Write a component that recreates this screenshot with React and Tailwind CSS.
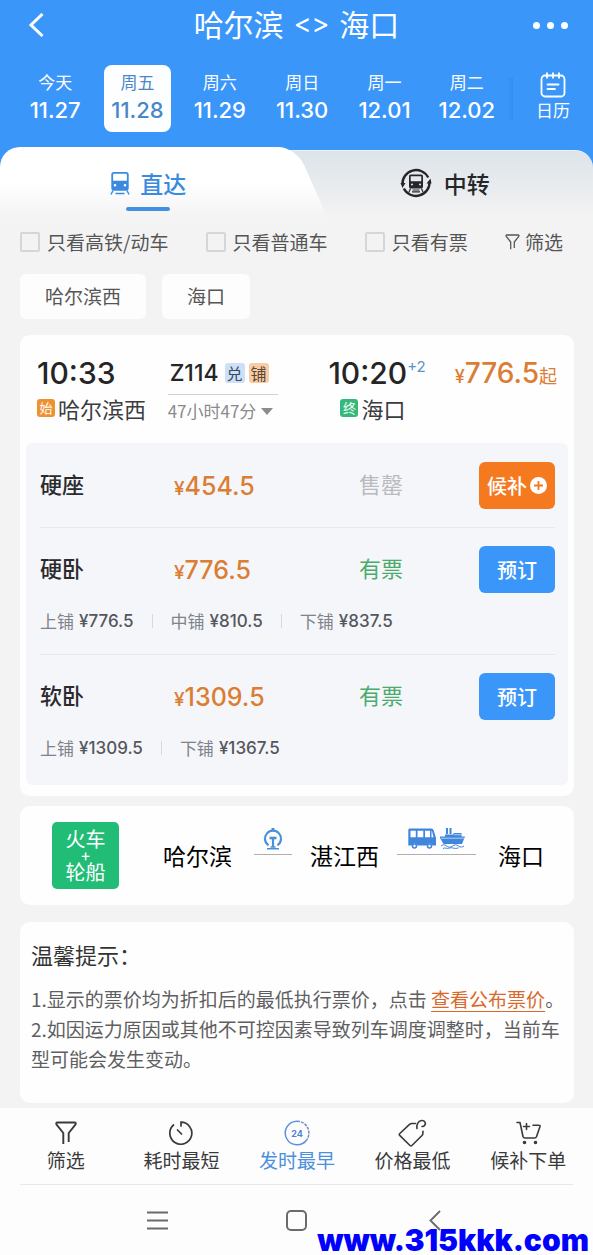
import React from "react";

const days = [
  { label: "今天", date: "11.27" },
  { label: "周五", date: "11.28", active: true },
  { label: "周六", date: "11.29" },
  { label: "周日", date: "11.30" },
  { label: "周一", date: "12.01" },
  { label: "周二", date: "12.02" },
];

const seats = [
  { name: "硬座", price: "454.5", available: false, berths: [] },
  {
    name: "硬卧",
    price: "776.5",
    available: true,
    berths: [
      ["上铺", "776.5"],
      ["中铺", "810.5"],
      ["下铺", "837.5"],
    ],
  },
  {
    name: "软卧",
    price: "1309.5",
    available: true,
    berths: [
      ["上铺", "1309.5"],
      ["下铺", "1367.5"],
    ],
  },
];

function TrainIcon() {
  return (
    <svg className="h-[23px] w-5" viewBox="0 0 20 23" aria-hidden="true">
      <path
        fillRule="evenodd"
        fill="currentColor"
        d="M4 0h12c1.800 0 2.700 1 2.700 2.600v13.400c0 1.700-1 2.700-2.700 2.700H4c-1.700 0-2.700-1-2.700-2.700V2.600C1.300 1 2.200 0 4 0ZM4.300 1.800c-.8 0-1.200.4-1.200 1.200v5.800h13.800V3c0-.8-.4-1.200-1.200-1.200ZM5 12a1.300 1.300 0 1 0 0 2.600A1.300 1.300 0 0 0 5 12Zm10 0a1.300 1.300 0 1 0 0 2.600 1.300 1.300 0 0 0 0-2.600Z"
      />
      <path d="M3 18.500 1 22.500M17 18.500l2 4M5.500 21.500h9" stroke="currentColor" strokeWidth="1.500" fill="none" />
    </svg>
  );
}

function TransferIcon() {
  return (
    <svg className="size-8" viewBox="0 0 32 32" fill="none" aria-hidden="true">
      <path d="M2.500 17.500A13.600 13.600 0 0 1 28.200 10.500M29.500 14.500A13.600 13.600 0 0 1 3.800 21.500" stroke="currentColor" strokeWidth="2.400" />
      <path d="M.5 16h5l-3 5ZM26.500 16.500h5l-1-5Z" fill="currentColor" />
      <path
        fillRule="evenodd"
        fill="currentColor"
        d="M11 7.500h10c1.500 0 2 .8 2 2v10c0 1.300-.7 2-2 2H11c-1.300 0-2-.7-2-2v-10c0-1.200.5-2 2-2Zm-.3 1.700v5h10.600v-5Zm1.300 7.300a1 1 0 1 0 0 2 1 1 0 0 0 0-2Zm8 0a1 1 0 1 0 0 2 1 1 0 0 0 0-2Z"
      />
      <path d="M10.500 21.500 9 25M21.500 21.500 23 25M12.500 23h7M12 24.800h8" stroke="currentColor" strokeWidth="1.200" />
    </svg>
  );
}

function CalendarIcon() {
  return (
    <svg className="size-[26px]" viewBox="0 0 26 26" fill="none" stroke="currentColor" strokeWidth="1.800" strokeLinecap="round" aria-hidden="true">
      <rect x="1.500" y="3.500" width="23" height="21" rx="3.500" />
      <path d="M7 1.200v4.600M13 1.200v4.600M19 1.200v4.600M7.500 12.500h11M7.500 17h7.500" />
    </svg>
  );
}

function FunnelIcon({ className }) {
  return (
    <svg className={className} viewBox="0 0 22 24" fill="none" stroke="currentColor" strokeWidth="1.900" strokeLinejoin="round" aria-hidden="true">
      <path d="M8.300 23V12L1.600 3.600C.9 2.600 1.200 1.500 2.500 1.500h17c1.300 0 1.600 1.100.9 2.100L13.700 12v9" />
    </svg>
  );
}

function TimerIcon() {
  return (
    <svg className="size-6" viewBox="0 0 24 24" fill="none" stroke="currentColor" strokeWidth="1.700" strokeLinecap="round" aria-hidden="true">
      <path d="M12 5V1.200A11 11 0 1 1 4.500 4M8.500 9l4 4" />
    </svg>
  );
}

function Clock24Icon() {
  return (
    <svg className="size-[26px]" viewBox="0 0 26 26" fill="none" aria-hidden="true">
      <path d="M13 1.200a11.800 11.800 0 1 0 9.800 18.500" stroke="#5b93dc" strokeWidth="1.500" />
      <path d="M13 1.200a11.800 11.800 0 0 1 9.800 18.500" stroke="#6f8fc4" strokeWidth="1.500" strokeDasharray="3 1" />
      <text x="13" y="16.500" textAnchor="middle" className="font-['Inter',sans-serif] text-[9px] font-bold" fill="#4c84d4">24</text>
    </svg>
  );
}

function TagIcon() {
  return (
    <svg className="h-7 w-[29px]" viewBox="0 0 29 28" fill="none" stroke="currentColor" strokeWidth="1.600" strokeLinecap="round" strokeLinejoin="round" aria-hidden="true">
      <path d="M17.500 4.500H13.500c-.7 0-1.200.2-1.700.7L1.800 14.500c-.7.700-.7 1.300-.1 1.900L12 26.500c.7.700 1.300.6 1.900 0L24 16.500c.5-.5.700-1 .8-1.700l.2-2.500" />
      <path d="M19 9.500c-.8-3.500 1-7.500 4.500-8 3.200-.4 4.800 2.400 3.200 4.800-.7 1-1.700 1.300-2.700 1.200" />
    </svg>
  );
}

function CartIcon() {
  return (
    <svg className="h-6 w-[25px]" viewBox="0 0 25 24" fill="none" stroke="currentColor" strokeWidth="1.600" strokeLinecap="round" strokeLinejoin="round" aria-hidden="true">
      <path d="M1 1.500h3L7 15.500c.3 1 .9 1.500 2 1.500h9.500c1 0 1.600-.4 2-1.300L24 5.500c.2-.8-.2-1.200-1-1.200h-6M10.500 2.500v6M7.500 5.500h6" />
      <circle cx="8.500" cy="21.500" r="1" fill="currentColor" />
      <circle cx="19.500" cy="21.500" r="1" fill="currentColor" />
    </svg>
  );
}

function RailwayIcon() {
  return (
    <svg className="h-[22px] w-5" viewBox="0 0 20 22" fill="none" stroke="currentColor" aria-hidden="true">
      <path d="M5.500 17.300A8 8 0 1 1 14.500 17.300" strokeWidth="2.200" />
      <path d="M10 0v3" strokeWidth="3" />
      <path d="M6.500 10h7" strokeWidth="2.600" />
      <path d="M10 10v9" strokeWidth="2.200" />
      <path d="M4 20.700h12M7.500 19h5" strokeWidth="1.600" />
    </svg>
  );
}

function BusIcon() {
  return (
    <svg className="h-[21px] w-7" viewBox="0 0 28 21" aria-hidden="true">
      <path
        fillRule="evenodd"
        fill="currentColor"
        d="M2 .5h21c1.500 0 2.300.8 2.800 2.200L28 10v7.500h-3.500a3.200 3.200 0 0 0-6 0h-9a3.200 3.200 0 0 0-6 0H.3V2.200C.3 1 .9.500 2 .5ZM2.500 2.700v6.500h5.300V2.700Zm7 0v6.500h5.800V2.700Zm7.500 0v6.500h5V2.700Zm6.500 0v6.500h2l-1.500-6Z"
      />
      <circle cx="6.500" cy="18" r="2" fill="none" stroke="currentColor" strokeWidth="1.600" />
      <circle cx="21.500" cy="18" r="2" fill="none" stroke="currentColor" strokeWidth="1.600" />
    </svg>
  );
}

function ShipIcon() {
  return (
    <svg className="h-[21px] w-[25px]" viewBox="0 0 25 21" aria-hidden="true">
      <path fill="currentColor" d="M6 0h2v6H6ZM9.500 0h2v6h-2ZM5 6.500h8.500V5h8v3.500H25l-3 7.500H3.500L0 10V8.500h5Z" />
      <path d="M1 10.200h23M14 6.700h7" stroke="#fff" strokeWidth=".6" />
      <path d="M1 18c2-1.600 3.500-1.600 5.500 0s4 1.600 6 0 4-1.600 6 0 3.500 1.200 5.500 0M3 20.500c2-1.200 3 0 4.500 0s3-1.200 5-.6 4 .8 6-.1" fill="none" stroke="currentColor" strokeWidth="1" />
    </svg>
  );
}

function Header() {
  return (
    <header className="bg-[#3b96fa] text-white">
      <div className="flex h-[50px] items-center justify-between px-6">
        <button type="button" aria-label="返回" className="w-9">
          <svg className="ml-1 h-6 w-4" viewBox="0 0 16 24" fill="none" stroke="currentColor" strokeWidth="3" aria-hidden="true">
            <path d="M14.500 1 3 12l11.500 11" />
          </svg>
        </button>
        <h1 className="flex items-center gap-[10px] pb-1 text-[30px] leading-none">
          哈尔滨
          <span className="font-['Inter',sans-serif] text-[27px] font-normal">&lt;&gt;</span>
          海口
        </h1>
        <button type="button" aria-label="更多" className="flex w-9 gap-[7px]">
          <i className="size-[7px] shrink-0 rounded-full bg-white" />
          <i className="size-[7px] shrink-0 rounded-full bg-white" />
          <i className="size-[7px] shrink-0 rounded-full bg-white" />
        </button>
      </div>
      <nav className="flex items-center pt-[15px] pb-[15px] pl-[14px]">
        <div className="flex flex-1">
          {days.map((d) => (
            <div key={d.date} className="flex flex-1 justify-center">
              <button
                type="button"
                className={
                  d.active
                    ? "flex h-[67px] w-[67px] flex-col items-center justify-center gap-1 rounded-lg bg-[#fdfeff] pb-[6px] text-[#4a87c9]"
                    : "flex h-[67px] w-[67px] flex-col items-center justify-center gap-1 pb-[6px]"
                }
              >
                <span className="text-[17px] leading-6">{d.label}</span>
                <span className="font-['Inter',sans-serif] text-[22px] leading-6 font-medium">{d.date}</span>
              </button>
            </div>
          ))}
        </div>
        <div className="h-[42px] w-[5px] bg-gradient-to-r from-[#3b96fa] to-[#338df2]" />
        <button type="button" className="flex w-20 flex-col items-center pb-[4px]">
          <CalendarIcon />
          <span className="text-[17px] leading-6">日历</span>
        </button>
      </nav>
    </header>
  );
}

function Tabs() {
  return (
    <div className="bg-[#3b96fa]">
      <div className="flex h-[72px] items-end" role="tablist">
        <div className="relative z-10 h-full w-1/2">
          <div className="absolute inset-y-0 right-8 left-0 rounded-tl-[20px] bg-gradient-to-b from-white from-50% to-[#f3f3f3]" />
          <div className="absolute inset-y-0 right-0 left-1/2 origin-top skew-x-[24deg] rounded-tr-[18px] bg-gradient-to-b from-white from-50% to-[#f3f3f3]" />
          <button type="button" role="tab" aria-selected="true" className="relative flex h-full w-full flex-col items-center pt-[20px] text-[#3a8be0]">
            <span className="flex items-center gap-[10px]">
              <TrainIcon />
              <span className="text-[23px] leading-8 font-medium">直达</span>
            </span>
            <span className="mt-2 h-1 w-11 rounded-sm bg-[#4190e2]" />
          </button>
        </div>
        <div className="relative h-[69px] w-1/2">
          <div className="absolute inset-y-0 right-0 -left-8 rounded-tr-[18px] border-t border-[#e6f4ff] bg-gradient-to-b from-[#dde4ea] to-[#f3f3f3]" />
          <button type="button" role="tab" aria-selected="false" className="relative flex h-full w-full items-start justify-center gap-3 pt-[17px] text-[#262629]">
            <TransferIcon />
            <span className="text-[23px] leading-8 font-medium">中转</span>
          </button>
        </div>
      </div>
    </div>
  );
}

function Filters() {
  return (
    <div className="pr-[30px] pl-5">
      <div className="flex items-center justify-between pt-[9px] text-[19px] leading-7 text-[#555]">
        {["只看高铁/动车", "只看普通车", "只看有票"].map((t) => (
          <label key={t} className="flex items-center gap-[7px] whitespace-nowrap">
            <input type="checkbox" className="size-5 appearance-none rounded-xs border-2 border-[#d6d6d6]" />
            {t}
          </label>
        ))}
        <button type="button" className="flex items-center gap-[5px] whitespace-nowrap">
          <FunnelIcon className="h-4 w-[15px]" />
          筛选
        </button>
      </div>
      <div className="flex gap-4 pt-[18px]">
        <button type="button" className="h-[45px] rounded-md bg-[#fdfdfd] px-[25px] text-[19px] text-[#555]">哈尔滨西</button>
        <button type="button" className="h-[45px] rounded-md bg-[#fdfdfd] px-[25px] text-[19px] text-[#555]">海口</button>
      </div>
    </div>
  );
}

function SeatRow({ seat }) {
  return (
    <li className="border-t border-[#e6e8ec] py-[18px] first:border-t-0">
      <div className="grid grid-cols-[134fr_185fr_120fr_76px] items-center">
        <span className="pb-[5px] text-[22px] leading-8 font-medium text-[#2b2b2e]">{seat.name}</span>
        <span className="pt-[3px] font-['Inter',sans-serif] text-[25px] leading-8 font-medium text-[#db7d33]">
          <span className="text-[19px]">¥</span>
          {seat.price}
        </span>
        {seat.available ? (
          <span className="pb-[5px] text-[22px] leading-8 text-[#4bab6c]">有票</span>
        ) : (
          <span className="pb-[5px] text-[22px] leading-8 text-[#b9babd]">售罄</span>
        )}
        {seat.available ? (
          <button type="button" className="h-[47px] rounded-md bg-[#3b96fa] text-[20px] font-medium text-white">预订</button>
        ) : (
          <button type="button" className="flex h-[47px] items-center justify-center gap-[3px] rounded-md bg-[#f4791f] text-[20px] font-medium text-white">
            候补
            <svg className="size-[17px]" viewBox="0 0 17 17" aria-hidden="true">
              <circle cx="8.500" cy="8.500" r="8.500" fill="#fff" />
              <path d="M8.500 4v9M4 8.500h9" stroke="#f4791f" strokeWidth="1.800" />
            </svg>
          </button>
        )}
      </div>
      {seat.berths.length > 0 && (
        <div className="flex items-center pt-4 pb-[3px] text-[17px] leading-6">
          {seat.berths.map(([name, price], i) => (
            <React.Fragment key={name}>
              {i > 0 && <i className="mr-[18px] ml-[18px] h-[14px] w-px bg-[#d6d8dd]" />}
              <span className="text-[#808288]">{name}</span>
              <span className="ml-[5px] font-['Inter',sans-serif] text-[17px] font-medium text-[#55575e]">¥{price}</span>
            </React.Fragment>
          ))}
        </div>
      )}
    </li>
  );
}

function TrainCard() {
  return (
    <section className="mt-4 rounded-[10px] bg-[#fefefe] px-[6px] pt-[22px] pb-[11px]">
      <div className="grid grid-cols-[130fr_160fr_125fr_103px] px-[11px]">
        <div>
          <div className="font-['Inter',sans-serif] text-[30px] leading-8 font-medium text-[#252527]">10:33</div>
          <div className="mt-[3px] flex items-center gap-[3px] whitespace-nowrap">
            <span className="flex size-[18px] items-center justify-center rounded-[3px] bg-[#ee9230] text-[13px] text-white">始</span>
            <span className="text-[22px] leading-8 text-[#3c3c3f]">哈尔滨西</span>
          </div>
        </div>
        <div className="flex flex-col items-start">
          <div className="flex h-8 items-center gap-1 pl-[2px]">
            <span className="font-['Inter',sans-serif] text-[23px] font-medium text-[#252527]">Z114</span>
            <span className="ml-[2px] flex size-5 items-center justify-center rounded-[3px] bg-[#cde0f8] text-[16px] text-[#3b4a60]">兑</span>
            <span className="flex size-5 items-center justify-center rounded-[3px] bg-[#f8cda6] text-[16px] text-[#5a4636]">铺</span>
          </div>
          <div className="mt-[5px] h-px w-[110px] bg-[#d2d2d4]" />
          <button type="button" className="flex items-center gap-[5px] pt-[2px] text-[17px] leading-7 whitespace-nowrap text-[#8b8b8e]">
            47小时47分
            <svg className="h-[7px] w-3" viewBox="0 0 12 7" fill="currentColor" aria-hidden="true">
              <path d="M0 0h12L6 7Z" />
            </svg>
          </button>
        </div>
        <div>
          <div className="flex items-start font-['Inter',sans-serif] text-[30px] leading-8 font-medium text-[#252527]">
            10:20
            <span className="text-[15px] leading-5 font-normal text-[#5b95c8]">+2</span>
          </div>
          <div className="mt-[3px] flex items-center gap-[3px] pl-3 whitespace-nowrap">
            <span className="flex size-[18px] items-center justify-center rounded-[3px] bg-[#34b97b] text-[13px] text-white">终</span>
            <span className="text-[22px] leading-8 text-[#3c3c3f]">海口</span>
          </div>
        </div>
        <div className="flex items-baseline justify-end font-['Inter',sans-serif] text-[28px] leading-8 font-medium whitespace-nowrap text-[#db7d33]">
          <span className="text-[18px]">¥</span>
          776.5
          <span className="font-['Noto_Sans_CJK_SC',sans-serif] text-[18px] font-normal">起</span>
        </div>
      </div>
      <ul className="mt-[18px] rounded-md bg-[#f4f6fa] pt-px pr-[13px] pb-1 pl-[14px]">
        {seats.map((s) => (
          <SeatRow key={s.name} seat={s} />
        ))}
      </ul>
    </section>
  );
}

function RouteCard() {
  return (
    <section className="mt-[10px] flex h-[99px] items-center justify-between rounded-[10px] bg-[#fefefe] pr-[30px] pl-8 text-[23px] text-black">
      <div className="mr-[26px] flex size-[67px] flex-col items-center justify-center rounded-[5px] bg-[#21bd76] text-white">
        <span className="text-[20px] leading-[26px]">火车</span>
        <span className="font-['Inter',sans-serif] text-[16px] leading-[7px]">+</span>
        <span className="text-[20px] leading-[26px]">轮船</span>
      </div>
      <span>哈尔滨</span>
      <span className="ml-1 flex h-[55px] w-[38px] flex-col items-center">
        <span className="flex h-[27px] w-full justify-center border-b border-[#b0b0b0] text-[#4a90d9]">
          <RailwayIcon />
        </span>
      </span>
      <span>湛江西</span>
      <span className="mr-1 flex h-[55px] w-[79px] flex-col items-center">
        <span className="flex h-[27px] w-full justify-center gap-1 border-b border-[#b0b0b0] text-[#3f86dc]">
          <BusIcon />
          <ShipIcon />
        </span>
      </span>
      <span>海口</span>
    </section>
  );
}

function Tips() {
  return (
    <section className="mt-[17px] rounded-[10px] bg-[#fefefe] pt-4 pr-[6px] pb-[29px] pl-[11px]">
      <h2 className="text-[22px] leading-8 text-[#333]">温馨提示：</h2>
      <div className="mt-[14px] text-[19px] leading-[30px] text-[#5f5f62]">
        <p>
          1.显示的票价均为折扣后的最低执行票价，点击{" "}
          <a href="#fares" className="text-[#d9682b] underline underline-offset-4">查看公布票价</a>。
        </p>
        <p>2.如因运力原因或其他不可控因素导致列车调度调整时，当前车型可能会发生变动。</p>
      </div>
    </section>
  );
}

const sorts = [
  { label: "筛选", icon: <FunnelIcon className="h-6 w-[22px]" /> },
  { label: "耗时最短", icon: <TimerIcon /> },
  { label: "发时最早", icon: <Clock24Icon />, active: true },
  { label: "价格最低", icon: <TagIcon /> },
  { label: "候补下单", icon: <CartIcon /> },
];

function BottomBar() {
  return (
    <footer className="mt-[5px] bg-[#fdfdfd]">
      <div className="flex h-[76px] pt-[11px] pr-[7px] pl-2">
        {sorts.map((s) => (
          <button
            key={s.label}
            type="button"
            className={
              s.active
                ? "flex flex-1 flex-col items-center whitespace-nowrap text-[#4a90de]"
                : "flex flex-1 flex-col items-center whitespace-nowrap text-[#3a3a3c]"
            }
          >
            <span className="flex h-7 items-center">{s.icon}</span>
            <span className="text-[19px] leading-[26px]">{s.label}</span>
          </button>
        ))}
      </div>
      <div className="mx-5 h-px bg-[#e8e8e8]" />
      <div className="relative flex h-[70px] items-center justify-center gap-[118px] text-[#6b6b6b]">
        <button type="button" aria-label="菜单">
          <svg className="size-[21px]" viewBox="0 0 21 21" stroke="currentColor" strokeWidth="1.900" aria-hidden="true">
            <path d="M0 2.500h21M0 10.500h21M0 18.500h21" />
          </svg>
        </button>
        <button type="button" aria-label="主页" className="size-[21px] rounded-[5px] border-2 border-[#6b6b6b]" />
        <button type="button" aria-label="后退">
          <svg className="size-[21px]" viewBox="0 0 21 21" fill="none" stroke="currentColor" strokeWidth="1.900" aria-hidden="true">
            <path d="M15 1 5.500 10.500l9.500 9.500" />
          </svg>
        </button>
        <span className="absolute right-1 bottom-px font-['Inter',sans-serif] text-[30px] leading-7 font-black text-[#0000ff]">www.315kkk.com</span>
      </div>
    </footer>
  );
}

export default function App() {
  return (
    <div className="bg-[#f3f3f3] font-['Noto_Sans_CJK_SC',sans-serif]">
      <Header />
      <Tabs />
      <Filters />
      <main className="pr-[19px] pl-5">
        <TrainCard />
        <RouteCard />
        <Tips />
      </main>
      <BottomBar />
    </div>
  );
}
